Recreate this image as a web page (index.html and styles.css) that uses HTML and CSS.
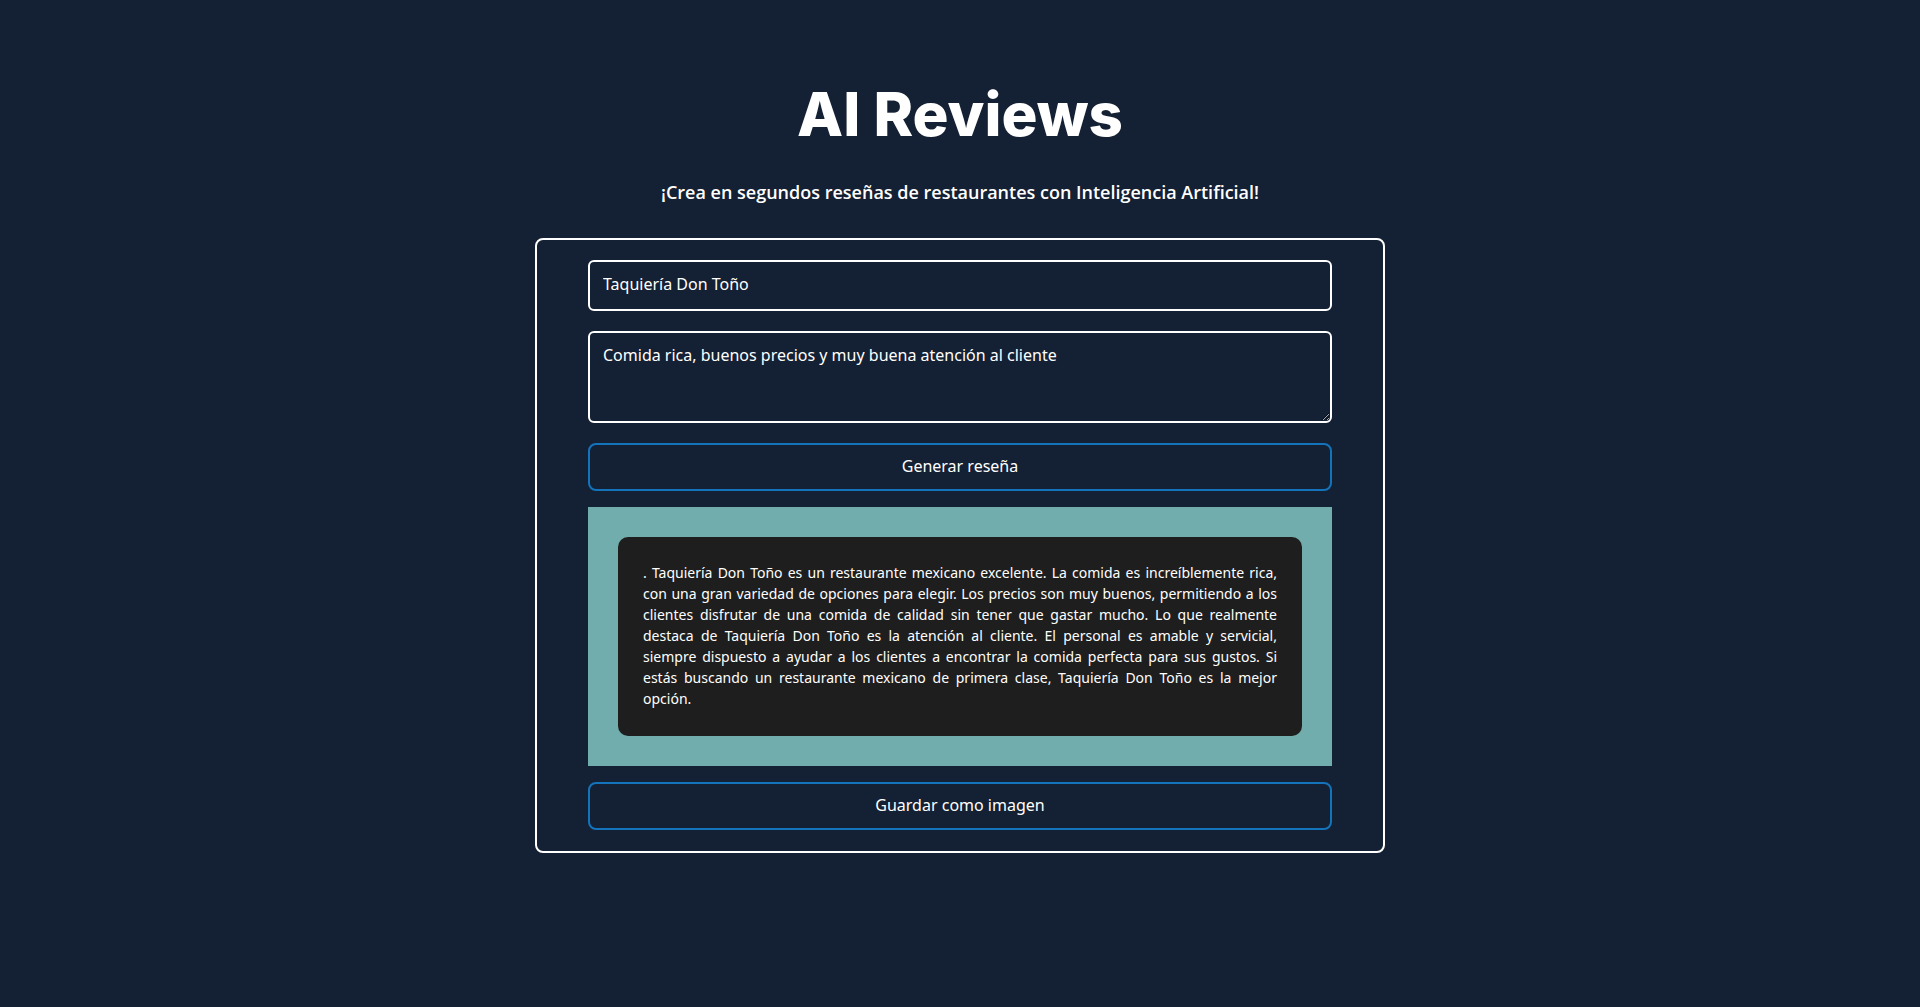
FILE: index.html
```html
<!DOCTYPE html>
<html lang="es">
<head>
  <meta charset="utf-8">
  <meta name="viewport" content="width=device-width, initial-scale=1">
  <title>AI Reviews</title>
  <link rel="stylesheet" href="styles.css">
</head>
<body>
  <main class="page">
    <header class="header">
      <h1 class="title">AI Reviews</h1>
      <p class="subtitle">¡Crea en segundos reseñas de restaurantes con Inteligencia Artificial!</p>
    </header>
    <form class="card">
      <input class="field" type="text" aria-label="Restaurante" value="Taquiería Don Toño">
      <textarea class="field field-area" aria-label="Detalles">Comida rica, buenos precios y muy buena atención al cliente</textarea>
      <div class="result">
        <button class="button" type="button">Generar reseña</button>
        <div class="frame">
          <p class="review">. Taquiería Don Toño es un restaurante mexicano excelente. La comida es increíblemente rica, con una gran variedad de opciones para elegir. Los precios son muy buenos, permitiendo a los clientes disfrutar de una comida de calidad sin tener que gastar mucho. Lo que realmente destaca de Taquiería Don Toño es la atención al cliente. El personal es amable y servicial, siempre dispuesto a ayudar a los clientes a encontrar la comida perfecta para sus gustos. Si estás buscando un restaurante mexicano de primera clase, Taquiería Don Toño es la mejor opción.</p>
        </div>
        <button class="button" type="button">Guardar como imagen</button>
      </div>
    </form>
  </main>
</body>
</html>
```

FILE: styles.css
```css
* {
  box-sizing: border-box;
}

body {
  margin: 0;
  background: #142033;
  color: #fff;
  font-family: "Noto Sans", "Open Sans", sans-serif;
  font-size: 16px;
}

.page {
  display: flex;
  flex-direction: column;
  align-items: center;
  gap: 32px;
  padding: 76px 20px;
}

.header {
  text-align: center;
}

.title {
  margin: 0;
  font-family: Inter, sans-serif;
  font-size: 60px;
  font-weight: 800;
  line-height: 76px;
}

.subtitle {
  margin: 26px 0 0;
  font-family: "Open Sans", "Noto Sans", sans-serif;
  font-size: 18px;
  font-weight: 600;
  line-height: 28px;
}

.card {
  display: flex;
  flex-direction: column;
  gap: 20px;
  width: 100%;
  max-width: 850px;
  padding: 20px 51px 21px;
  border: 2px solid #fff;
  border-radius: 8px;
}

.field {
  display: block;
  width: 100%;
  padding: 11px 13px 13px;
  border: 2px solid #fff;
  border-radius: 6px;
  background: transparent;
  color: inherit;
  font: inherit;
  line-height: 23px;
}

.field-area {
  height: 92px;
  resize: vertical;
}

.result {
  display: flex;
  flex-direction: column;
  gap: 16px;
}

.button {
  padding: 9px 10px 11px;
  border: 2px solid #1474bb;
  border-radius: 8px;
  background: transparent;
  color: inherit;
  font: inherit;
  line-height: 24px;
}

.frame {
  padding: 30px;
  background: #71adad;
}

.review {
  margin: 0;
  padding: 25px 25px 27px;
  border-radius: 10px;
  background: #1e1e1e;
  font-size: 14px;
  line-height: 21px;
  text-align: justify;
}
```
